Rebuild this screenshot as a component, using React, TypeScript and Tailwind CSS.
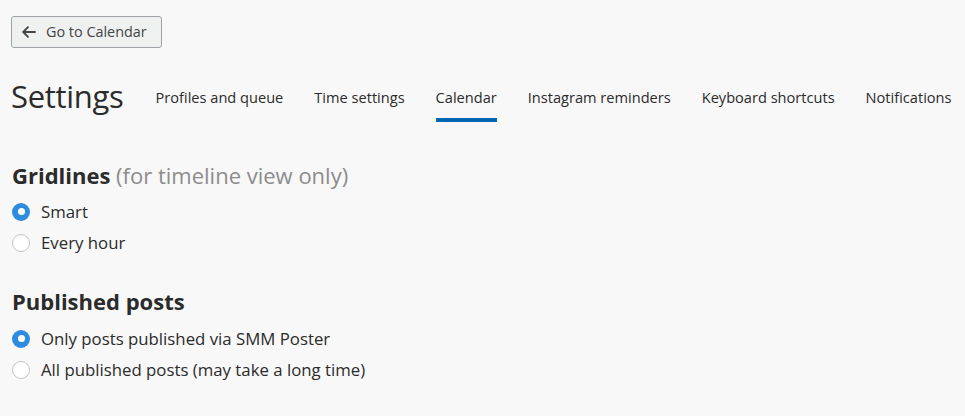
import React from "react";

function Radio({ checked, label }: { checked: boolean; label: string }) {
  return (
    <label className="flex items-center gap-[11px] h-[31px] cursor-pointer">
      {checked ? (
        <span className="w-[18px] h-[18px] rounded-full bg-[#2d8ce0] flex items-center justify-center">
          <span className="w-[7px] h-[7px] rounded-full bg-white" />
        </span>
      ) : (
        <span className="w-[18px] h-[18px] rounded-full bg-white border border-[#c4c4c4]" />
      )}
      <span className="text-[16.8px] text-[#2b2b2b]">{label}</span>
    </label>
  );
}

export default function App() {
  const tabs = [
    "Profiles and queue",
    "Time settings",
    "Calendar",
    "Instagram reminders",
    "Keyboard shortcuts",
    "Notifications",
  ];
  return (
    <div
      className="min-h-[416px] w-full bg-[#f8f8f8] text-[#2b2b2b] pl-[11px] pt-[16px]"
      style={{ fontFamily: '"Open Sans", "Noto Sans", sans-serif' }}
    >
      <button className="flex items-center gap-[10px] h-[32px] w-[151px] pl-[10px] rounded-[3px] border border-[#9da3a6] bg-[#eff1f1] text-[14.4px] text-[#444]">
        <svg width="14" height="12" viewBox="0 0 14 12" fill="none" stroke="#444" strokeWidth="1.8" strokeLinecap="round" strokeLinejoin="round">
          <path d="M13 6H1.5M6 1.2L1.2 6 6 10.8" />
        </svg>
        <span>Go to Calendar</span>
      </button>

      <div className="flex items-end mt-[28px] h-[46px]">
        <h1 className="text-[31px] leading-[40px] pb-[6px] mr-[32px] tracking-[-0.3px]">Settings</h1>
        <nav className="flex gap-[31px]">
          {tabs.map((t) => (
            <div key={t} className="flex flex-col items-stretch">
              <span className="text-[14.6px] leading-[20px] pb-[11px] text-[#2b2b2b]">{t}</span>
              <span className={t === "Calendar" ? "h-[4px] bg-[#0066b4]" : "h-[4px]"} />
            </div>
          ))}
        </nav>
      </div>

      <div className="mt-[39px] pl-[1px]">
        <h2 className="text-[22px] leading-[28px]">
          <span className="font-bold">Gridlines</span>{" "}
          <span className="text-[#8c8c8c]">(for timeline view only)</span>
        </h2>
        <div className="mt-[7px]">
          <Radio checked label="Smart" />
          <Radio checked={false} label="Every hour" />
        </div>
      </div>

      <div className="mt-[29px] pl-[1px]">
        <h2 className="text-[22px] leading-[28px] font-bold">Published posts</h2>
        <div className="mt-[8px]">
          <Radio checked label="Only posts published via SMM Poster" />
          <Radio checked={false} label="All published posts (may take a long time)" />
        </div>
      </div>
    </div>
  );
}
